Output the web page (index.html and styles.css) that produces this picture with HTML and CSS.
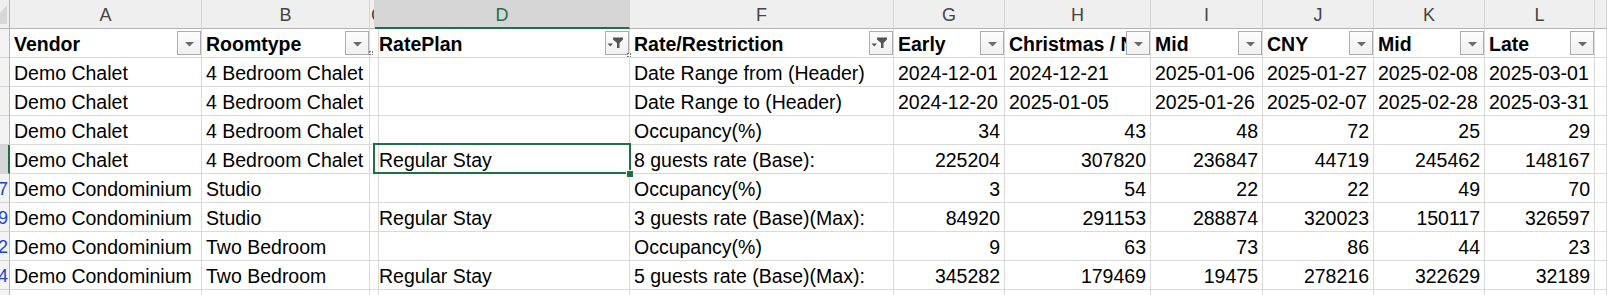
FILE: index.html
```html
<!DOCTYPE html>
<html>
<head>
<meta charset="utf-8">
<link rel="stylesheet" href="styles.css">
</head>
<body>
<div class="sheet">
  <!-- column header row -->
  <div class="corner"><svg width="9" height="28" viewBox="0 0 9 28"><polygon points="0,13 7,5 7,24 0,24" fill="#d6d6d6"/></svg></div>
  <div class="ch">A</div>
  <div class="ch">B</div>
  <div class="ch chc">C</div>
  <div class="ch chsel">D</div>
  <div class="ch">F</div>
  <div class="ch">G</div>
  <div class="ch">H</div>
  <div class="ch">I</div>
  <div class="ch">J</div>
  <div class="ch">K</div>
  <div class="ch">L</div>
  <div class="ch"></div>

  <!-- table header row -->
  <div class="rh"></div>
  <div class="c hd"><span class="lbl">Vendor</span><span class="fb"><svg width="22" height="22" viewBox="0 0 22 22"><polygon points="7,10 16,10 11.5,14.5" fill="#6b6b6b"/></svg></span></div>
  <div class="c hd rel"><span class="lbl">Roomtype</span><span class="fb"><svg width="22" height="22" viewBox="0 0 22 22"><polygon points="7,10 16,10 11.5,14.5" fill="#6b6b6b"/></svg></span><span class="rz rzb"></span></div>
  <div class="c"></div>
  <div class="c hd rel"><span class="lbl">RatePlan</span><span class="fb"><svg width="22" height="22" viewBox="0 0 22 22"><polygon points="7,5.5 17,5.5 17,7.5 13.5,11 13.5,16 11,16 11,11 7,7.5" fill="#555"/><polygon points="1.5,11.5 7,11.5 4.25,14.5" fill="#555"/></svg></span><span class="rz rzd"></span></div>
  <div class="c hd"><span class="lbl">Rate/Restriction</span><span class="fb"><svg width="22" height="22" viewBox="0 0 22 22"><polygon points="7,5.5 17,5.5 17,7.5 13.5,11 13.5,16 11,16 11,11 7,7.5" fill="#555"/><polygon points="1.5,11.5 7,11.5 4.25,14.5" fill="#555"/></svg></span></div>
  <div class="c hd"><span class="lbl">Early</span><span class="fb"><svg width="22" height="22" viewBox="0 0 22 22"><polygon points="7,10 16,10 11.5,14.5" fill="#6b6b6b"/></svg></span></div>
  <div class="c hd"><span class="lbl">Christmas / New Year</span><span class="fb"><svg width="22" height="22" viewBox="0 0 22 22"><polygon points="7,10 16,10 11.5,14.5" fill="#6b6b6b"/></svg></span></div>
  <div class="c hd"><span class="lbl">Mid</span><span class="fb"><svg width="22" height="22" viewBox="0 0 22 22"><polygon points="7,10 16,10 11.5,14.5" fill="#6b6b6b"/></svg></span></div>
  <div class="c hd"><span class="lbl">CNY</span><span class="fb"><svg width="22" height="22" viewBox="0 0 22 22"><polygon points="7,10 16,10 11.5,14.5" fill="#6b6b6b"/></svg></span></div>
  <div class="c hd"><span class="lbl">Mid</span><span class="fb"><svg width="22" height="22" viewBox="0 0 22 22"><polygon points="7,10 16,10 11.5,14.5" fill="#6b6b6b"/></svg></span></div>
  <div class="c hd"><span class="lbl">Late</span><span class="fb"><svg width="22" height="22" viewBox="0 0 22 22"><polygon points="7,10 16,10 11.5,14.5" fill="#6b6b6b"/></svg></span></div>
  <div class="c"></div>

  <!-- row 1 -->
  <div class="rh"></div>
  <div class="c">Demo Chalet</div>
  <div class="c">4 Bedroom Chalet</div>
  <div class="c"></div>
  <div class="c"></div>
  <div class="c">Date Range from (Header)</div>
  <div class="c">2024-12-01</div>
  <div class="c">2024-12-21</div>
  <div class="c">2025-01-06</div>
  <div class="c">2025-01-27</div>
  <div class="c">2025-02-08</div>
  <div class="c">2025-03-01</div>
  <div class="c"></div>

  <!-- row 2 -->
  <div class="rh"></div>
  <div class="c">Demo Chalet</div>
  <div class="c">4 Bedroom Chalet</div>
  <div class="c"></div>
  <div class="c"></div>
  <div class="c">Date Range to (Header)</div>
  <div class="c">2024-12-20</div>
  <div class="c">2025-01-05</div>
  <div class="c">2025-01-26</div>
  <div class="c">2025-02-07</div>
  <div class="c">2025-02-28</div>
  <div class="c">2025-03-31</div>
  <div class="c"></div>

  <!-- row 3 -->
  <div class="rh"></div>
  <div class="c">Demo Chalet</div>
  <div class="c">4 Bedroom Chalet</div>
  <div class="c"></div>
  <div class="c"></div>
  <div class="c">Occupancy(%)</div>
  <div class="c n">34</div>
  <div class="c n">43</div>
  <div class="c n">48</div>
  <div class="c n">72</div>
  <div class="c n">25</div>
  <div class="c n">29</div>
  <div class="c"></div>

  <!-- row 4 (selected) -->
  <div class="rh rhsel"></div>
  <div class="c">Demo Chalet</div>
  <div class="c">4 Bedroom Chalet</div>
  <div class="c"></div>
  <div class="c active">Regular Stay<span class="selbox"></span><span class="handle"></span></div>
  <div class="c">8 guests rate (Base):</div>
  <div class="c n">225204</div>
  <div class="c n">307820</div>
  <div class="c n">236847</div>
  <div class="c n">44719</div>
  <div class="c n">245462</div>
  <div class="c n">148167</div>
  <div class="c"></div>

  <!-- row 5 -->
  <div class="rh">7</div>
  <div class="c">Demo Condominium</div>
  <div class="c">Studio</div>
  <div class="c"></div>
  <div class="c"></div>
  <div class="c">Occupancy(%)</div>
  <div class="c n">3</div>
  <div class="c n">54</div>
  <div class="c n">22</div>
  <div class="c n">22</div>
  <div class="c n">49</div>
  <div class="c n">70</div>
  <div class="c"></div>

  <!-- row 6 -->
  <div class="rh">9</div>
  <div class="c">Demo Condominium</div>
  <div class="c">Studio</div>
  <div class="c"></div>
  <div class="c">Regular Stay</div>
  <div class="c">3 guests rate (Base)(Max):</div>
  <div class="c n">84920</div>
  <div class="c n">291153</div>
  <div class="c n">288874</div>
  <div class="c n">320023</div>
  <div class="c n">150117</div>
  <div class="c n">326597</div>
  <div class="c"></div>

  <!-- row 7 -->
  <div class="rh">2</div>
  <div class="c">Demo Condominium</div>
  <div class="c">Two Bedroom</div>
  <div class="c"></div>
  <div class="c"></div>
  <div class="c">Occupancy(%)</div>
  <div class="c n">9</div>
  <div class="c n">63</div>
  <div class="c n">73</div>
  <div class="c n">86</div>
  <div class="c n">44</div>
  <div class="c n">23</div>
  <div class="c"></div>

  <!-- row 8 -->
  <div class="rh">4</div>
  <div class="c">Demo Condominium</div>
  <div class="c">Two Bedroom</div>
  <div class="c"></div>
  <div class="c">Regular Stay</div>
  <div class="c">5 guests rate (Base)(Max):</div>
  <div class="c n">345282</div>
  <div class="c n">179469</div>
  <div class="c n">19475</div>
  <div class="c n">278216</div>
  <div class="c n">322629</div>
  <div class="c n">32189</div>
  <div class="c"></div>

  <!-- row 9 (partial) -->
  <div class="rh"></div>
  <div class="c"></div>
  <div class="c"></div>
  <div class="c"></div>
  <div class="c"></div>
  <div class="c"></div>
  <div class="c"></div>
  <div class="c"></div>
  <div class="c"></div>
  <div class="c"></div>
  <div class="c"></div>
  <div class="c"></div>
  <div class="c"></div>
</div>
</body>
</html>
```

FILE: styles.css
```css
html, body {
  margin: 0;
  padding: 0;
  background: #ffffff;
  overflow: hidden;
}

.sheet {
  display: grid;
  grid-template-columns: 10px 192px 168px 5px 255px 264px 111px 146px 112px 111px 111px 110px 1fr;
  grid-auto-rows: 29px;
  width: 1607px;
  font-family: "Liberation Sans", Arial, sans-serif;
  font-size: 19.5px;
  color: #000;
}

.corner {
  background: #efefef;
  border-right: 1px solid #b4b4b4;
  border-bottom: 1px solid #b4b4b4;
  box-sizing: border-box;
  overflow: hidden;
}
.corner svg { display: block; }

.ch {
  box-sizing: border-box;
  background: #efefef;
  border-right: 1px solid #d4d4d4;
  border-bottom: 1px solid #b4b4b4;
  font-size: 18px;
  line-height: 28px;
  padding-top: 1px;
  color: #444;
  text-align: center;
  overflow: hidden;
  white-space: nowrap;
}
.chc {
  text-align: left;
  padding-left: 1px;
}
.chsel {
  background: #d6d6d6;
  color: #1e7145;
  border-bottom: 2px solid #1e7145;
}

.rh {
  box-sizing: border-box;
  background: #f3f3f3;
  border-right: 1px solid #b4b4b4;
  border-bottom: 1px solid #d4d4d4;
  font-size: 18px;
  line-height: 26px;
  padding-top: 2px;
  padding-right: 1px;
  color: #1a3fe0;
  display: flex;
  justify-content: flex-end;
  overflow: hidden;
  white-space: nowrap;
}
.rhsel {
  background: #d6d6d6;
  border-right: 2px solid #1e7145;
}

.c {
  box-sizing: border-box;
  border-right: 1px solid #dadada;
  border-bottom: 1px solid #dadada;
  padding: 2px 4px 0 4px;
  line-height: 26px;
  white-space: nowrap;
  overflow: hidden;
}
.n { text-align: right; }

.hd {
  display: flex;
  align-items: flex-start;
  font-weight: bold;
  padding-right: 0;
}
.hd .lbl {
  flex: 1 1 auto;
  min-width: 0;
  overflow: hidden;
  white-space: nowrap;
}
.fb {
  flex: none;
  width: 24px;
  height: 24px;
  box-sizing: border-box;
  border: 1px solid #adadad;
  background: linear-gradient(#fdfdfd, #f0f0f0);
}
.fb svg { display: block; }

.rel { position: relative; overflow: visible; }
.rz {
  position: absolute;
  width: 4px;
  height: 4px;
  box-sizing: border-box;
  border: 1px dotted #777;
  background: #fff;
  z-index: 2;
}
.rzb { right: -4px; top: 22px; }
.rzd { right: -2px; top: 24px; }

.active {
  position: relative;
  overflow: visible;
}
.selbox {
  position: absolute;
  left: -2px;
  top: -2px;
  width: 258px;
  height: 31px;
  box-sizing: border-box;
  border: 2px solid #1e7145;
  z-index: 3;
}
.handle {
  position: absolute;
  left: 251px;
  top: 25px;
  width: 6px;
  height: 6px;
  background: #1e7145;
  border: 1px solid #fff;
  z-index: 4;
}
```
